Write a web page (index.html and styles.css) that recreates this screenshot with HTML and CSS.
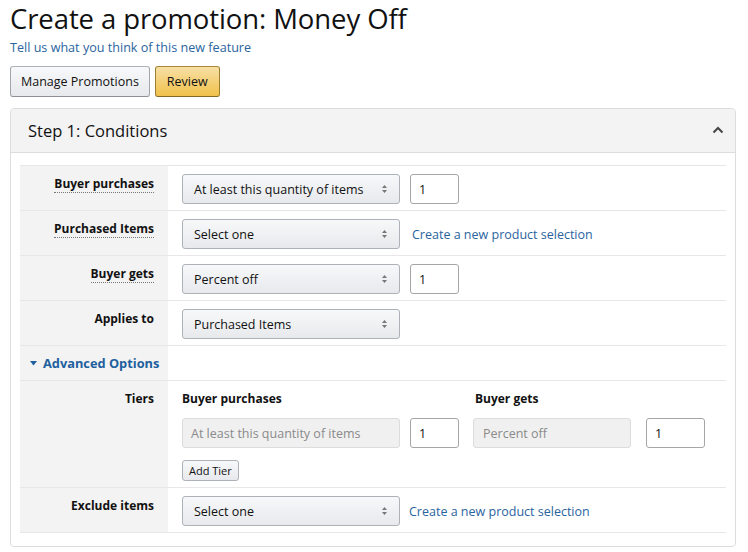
FILE: index.html
```html
<!DOCTYPE html>
<html lang="en">
<head>
<meta charset="utf-8">
<title>Create a promotion: Money Off</title>
<link rel="stylesheet" href="styles.css">
</head>
<body>
<h1 class="title">Create a promotion: Money Off</h1>
<a class="feedback" href="#">Tell us what you think of this new feature</a>
<div class="actions">
  <button class="btn btn-default">Manage Promotions</button>
  <button class="btn btn-primary">Review</button>
</div>

<section class="panel">
  <header class="panel-head">
    <span class="panel-title">Step 1: Conditions</span>
    <svg class="chevron" width="12" height="8" viewBox="0 0 12 8"><polyline points="1.5,6.5 6,2 10.5,6.5" fill="none" stroke="#444" stroke-width="2"/></svg>
  </header>
  <div class="panel-body">
    <div class="form">
      <div class="row">
        <div class="label"><span class="dotted">Buyer purchases</span></div>
        <div class="field">
          <div class="select"><span>At least this quantity of items</span><svg class="arrows" width="7" height="10" viewBox="0 0 7 10"><path d="M3.5 1 L6 4 L1 4 Z M3.5 9 L6 6 L1 6 Z" fill="#777"/></svg></div>
          <div class="input">1</div>
        </div>
      </div>
      <div class="row">
        <div class="label"><span class="dotted">Purchased Items</span></div>
        <div class="field">
          <div class="select"><span>Select one</span><svg class="arrows" width="7" height="10" viewBox="0 0 7 10"><path d="M3.5 1 L6 4 L1 4 Z M3.5 9 L6 6 L1 6 Z" fill="#777"/></svg></div>
          <a class="link" href="#">Create a new product selection</a>
        </div>
      </div>
      <div class="row">
        <div class="label"><span class="dotted">Buyer gets</span></div>
        <div class="field">
          <div class="select"><span>Percent off</span><svg class="arrows" width="7" height="10" viewBox="0 0 7 10"><path d="M3.5 1 L6 4 L1 4 Z M3.5 9 L6 6 L1 6 Z" fill="#777"/></svg></div>
          <div class="input">1</div>
        </div>
      </div>
      <div class="row">
        <div class="label">Applies to</div>
        <div class="field">
          <div class="select"><span>Purchased Items</span><svg class="arrows" width="7" height="10" viewBox="0 0 7 10"><path d="M3.5 1 L6 4 L1 4 Z M3.5 9 L6 6 L1 6 Z" fill="#777"/></svg></div>
        </div>
      </div>
      <div class="row row-adv">
        <div class="label label-left"><a class="adv" href="#"><svg class="caret" width="7" height="5" viewBox="0 0 7 5"><path d="M0 0 L7 0 L3.5 4.5 Z" fill="#1e5f9e"/></svg>Advanced Options</a></div>
        <div class="field"></div>
      </div>
      <div class="row">
        <div class="label">Tiers</div>
        <div class="field tiers">
          <div class="tier-grid">
            <div class="tier-head">Buyer purchases</div>
            <div></div>
            <div class="tier-head head-gets">Buyer gets</div>
            <div></div>
            <div class="select disabled">At least this quantity of items</div>
            <div class="input">1</div>
            <div class="select disabled narrow">Percent off</div>
            <div class="input wide">1</div>
          </div>
          <button class="btn-small">Add Tier</button>
        </div>
      </div>
      <div class="row">
        <div class="label">Exclude items</div>
        <div class="field">
          <div class="select"><span>Select one</span><svg class="arrows" width="7" height="10" viewBox="0 0 7 10"><path d="M3.5 1 L6 4 L1 4 Z M3.5 9 L6 6 L1 6 Z" fill="#777"/></svg></div>
          <a class="link link-tight" href="#">Create a new product selection</a>
        </div>
      </div>
    </div>
  </div>
</section>
</body>
</html>
```

FILE: styles.css
```css
* { box-sizing: border-box; }

body {
  margin: 0;
  padding: 3px 12px 0 10px;
  font-family: "Open Sans", "Noto Sans", sans-serif;
  font-size: 13px;
  color: #111;
  background: #fff;
}

.title {
  margin: 0;
  font-size: 27.5px;
  font-weight: 400;
  line-height: 32px;
  letter-spacing: -0.1px;
  color: #111;
}

.feedback {
  display: block;
  margin-top: 5px;
  font-size: 12.6px;
  line-height: 16px;
  color: #2a64a0;
  text-decoration: none;
}

.actions {
  display: flex;
  gap: 5px;
  margin-top: 10px;
}

.btn {
  height: 31px;
  padding: 0 10px;
  font-family: inherit;
  font-size: 12.5px;
  color: #111;
  border-radius: 3px;
  border: 1px solid;
  cursor: pointer;
}

.btn-default {
  background: linear-gradient(#f7f8fa, #e7e9ec);
  border-color: #adb1b8 #a2a6ac #8d9096;
}

.btn-primary {
  padding: 0 11px;
  background: linear-gradient(#f7dfa5, #f0c14b);
  border-color: #a88734 #9c7e31 #846a29;
}

.panel {
  margin-top: 11px;
  border: 1px solid #ddd;
  border-radius: 4px;
  overflow: hidden;
}

.panel-head {
  display: flex;
  align-items: center;
  justify-content: space-between;
  height: 44px;
  padding: 0 11px 0 17px;
  background: #f3f3f3;
  border-bottom: 1px solid #ddd;
}

.panel-title {
  font-size: 16.5px;
  color: #111;
}

.chevron { display: block; margin-top: -2px; }

.panel-body {
  padding: 12px 9px 13px 9px;
}

.form {
  border-bottom: 1px solid #e7e7e7;
}

.row {
  display: flex;
  border-top: 1px solid #e7e7e7;
}

.label {
  width: 148px;
  flex: none;
  background: #f3f3f3;
  padding: 10px 14px 0 0;
  text-align: right;
  font-weight: 700;
  font-size: 12px;
  line-height: 16px;
}

.dotted {
  border-bottom: 1px dotted #777;
}

.label-left {
  text-align: left;
  padding: 9px 0 0 10px;
}

.adv {
  color: #1e5f9e;
  text-decoration: none;
  font-size: 12.8px;
}

.caret {
  display: inline-block;
  vertical-align: middle;
  margin: -2px 6px 0 0;
}

.row-adv { height: 35px; }

.field {
  flex: 1;
  display: flex;
  align-items: center;
  padding: 8px 0 6px 14px;
  min-height: 44px;
}

.row-adv .field { min-height: 0; padding: 0; }

.select {
  width: 218px;
  height: 30px;
  display: flex;
  align-items: center;
  justify-content: space-between;
  padding: 0 11px 0 11px;
  border: 1px solid #adb1b8;
  border-radius: 3px;
  background: linear-gradient(#f7f8fa, #e7e9ec);
  font-size: 12.5px;
  color: #111;
  white-space: nowrap;
}

.select .arrows { flex: none; }

.select.disabled {
  background: #f0f0f0;
  border-color: #dcdcdc;
  color: #8a8a8a;
  padding-left: 8px;
}

.select.narrow { width: 158px; padding-left: 9px; }

.input {
  width: 49px;
  height: 30px;
  margin-left: 10px;
  padding-left: 8px;
  display: flex;
  align-items: center;
  border: 1px solid #a6a6a6;
  border-radius: 3px;
  background: #fff;
  font-size: 12.5px;
  color: #111;
}

.input.wide { width: 59px; margin-left: 15px; }

.link {
  margin-left: 12px;
  color: #2a64a0;
  text-decoration: none;
  font-size: 12.5px;
}

.link-tight { margin-left: 9px; }

.field.tiers {
  flex-direction: column;
  align-items: flex-start;
  padding-top: 10px;
}

.tier-grid {
  display: grid;
  grid-template-columns: 218px 58px 173px 74px;
  row-gap: 11px;
}

.tier-grid .select.narrow { margin-left: 15px; }

.tier-head {
  font-weight: 700;
  font-size: 12px;
  line-height: 16px;
}

.head-gets { padding-left: 17px; }

.btn-small {
  margin-top: 12px;
  height: 21px;
  padding: 0 6px;
  font-family: inherit;
  font-size: 11px;
  color: #111;
  border: 1px solid #adb1b8;
  border-radius: 3px;
  background: linear-gradient(#f7f8fa, #e7e9ec);
}
```
